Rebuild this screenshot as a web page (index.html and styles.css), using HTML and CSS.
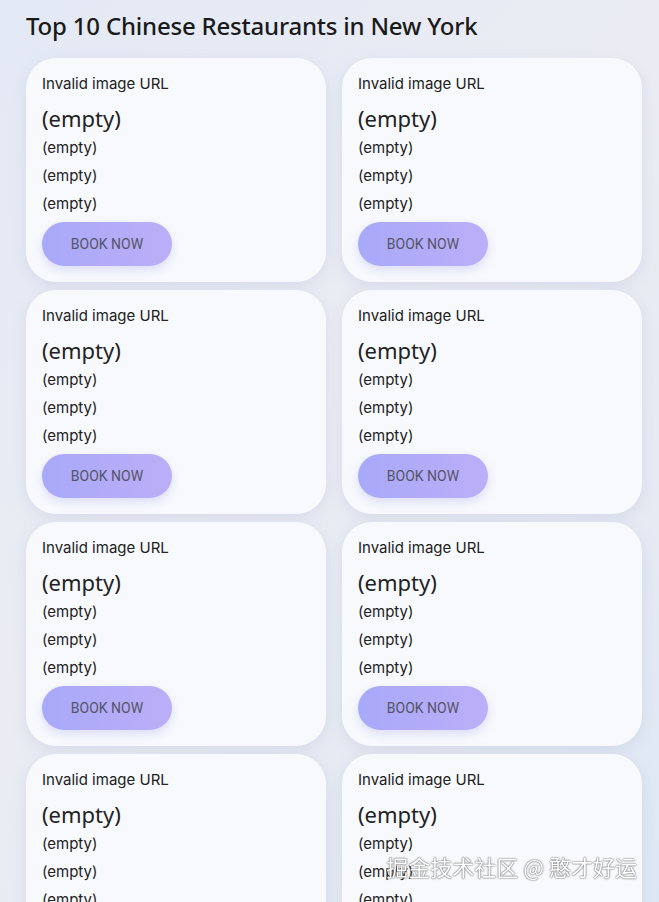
FILE: index.html
```html
<!DOCTYPE html>
<html>
<head>
<meta charset="utf-8">
<link rel="stylesheet" href="styles.css">
</head>
<body>
<main class="page">
  <h1 class="title">Top 10 Chinese Restaurants in New York</h1>
  <div class="grid">
    <div class="card"><div class="img-msg">Invalid image URL</div><div class="name">(empty)</div><div class="line">(empty)</div><div class="line">(empty)</div><div class="line">(empty)</div><button class="book">BOOK NOW</button></div>
    <div class="card"><div class="img-msg">Invalid image URL</div><div class="name">(empty)</div><div class="line">(empty)</div><div class="line">(empty)</div><div class="line">(empty)</div><button class="book">BOOK NOW</button></div>
    <div class="card"><div class="img-msg">Invalid image URL</div><div class="name">(empty)</div><div class="line">(empty)</div><div class="line">(empty)</div><div class="line">(empty)</div><button class="book">BOOK NOW</button></div>
    <div class="card"><div class="img-msg">Invalid image URL</div><div class="name">(empty)</div><div class="line">(empty)</div><div class="line">(empty)</div><div class="line">(empty)</div><button class="book">BOOK NOW</button></div>
    <div class="card"><div class="img-msg">Invalid image URL</div><div class="name">(empty)</div><div class="line">(empty)</div><div class="line">(empty)</div><div class="line">(empty)</div><button class="book">BOOK NOW</button></div>
    <div class="card"><div class="img-msg">Invalid image URL</div><div class="name">(empty)</div><div class="line">(empty)</div><div class="line">(empty)</div><div class="line">(empty)</div><button class="book">BOOK NOW</button></div>
    <div class="card"><div class="img-msg">Invalid image URL</div><div class="name">(empty)</div><div class="line">(empty)</div><div class="line">(empty)</div><div class="line">(empty)</div><button class="book">BOOK NOW</button></div>
    <div class="card"><div class="img-msg">Invalid image URL</div><div class="name">(empty)</div><div class="line">(empty)</div><div class="line">(empty)</div><div class="line">(empty)</div><button class="book">BOOK NOW</button></div>
  </div>
</main>
<div class="watermark">掘金技术社区 @ 憨才好运</div>
</body>
</html>
```
FILE: styles.css
```css
html, body {
  margin: 0;
  height: 100%;
  overflow: hidden;
}
body {
  background: linear-gradient(135deg, #e3e9f5 0%, #ebecf3 45%, #e6eaf3 75%, #dde8f5 100%);
  font-family: "Inter", "Noto Sans", sans-serif;
  color: #222;
}
.page {
  padding: 9px 17px 0 26px;
}
.title {
  margin: 0 0 15px 0;
  font-family: "Noto Sans", sans-serif;
  font-size: 24px;
  font-weight: 500;
  letter-spacing: -0.2px;
  line-height: 34px;
  color: #1a1a1a;
}
.grid {
  display: grid;
  grid-template-columns: 300px 300px;
  column-gap: 16px;
  row-gap: 8px;
}
.card {
  background: #f7f9fd;
  border-radius: 30px;
  padding: 16px;
  box-shadow: 0 4px 14px rgba(180, 190, 215, 0.35);
  display: flex;
  flex-direction: column;
  align-items: flex-start;
}
.img-msg {
  font-size: 15px;
  line-height: 20px;
  color: #222;
}
.name {
  font-family: "Noto Sans", sans-serif;
  font-size: 22px;
  line-height: 32px;
  margin-top: 8px;
  color: #222;
}
.line {
  font-size: 15px;
  line-height: 28px;
  color: #222;
}
.book {
  margin-top: 4px;
  width: 130px;
  height: 44px;
  border: none;
  border-radius: 22px;
  background: linear-gradient(90deg, #a8a9f9 0%, #bcaef8 100%);
  box-shadow: 0 4px 10px rgba(160, 160, 240, 0.3);
  font-family: "Roboto", sans-serif;
  font-size: 14px;
  color: #555566;
  padding: 0;
}
.watermark {
  position: fixed;
  right: 22px;
  bottom: 20px;
  font-family: "Noto Sans CJK SC", sans-serif;
  font-size: 22px;
  color: #ffffff;
  text-shadow: 0 0 2px #666, 0 0 1px #555;
}
```
